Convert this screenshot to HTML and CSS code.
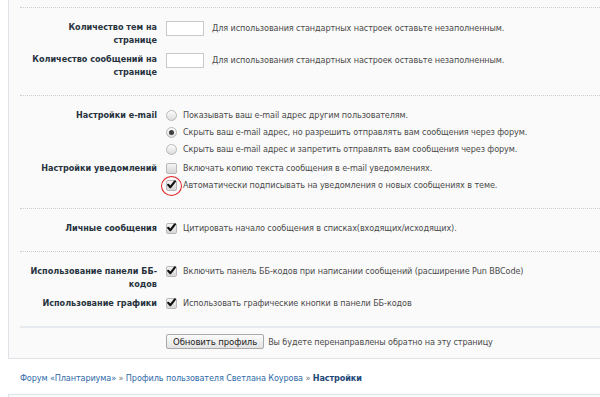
FILE: index.html
```html
<!DOCTYPE html>
<html lang="ru">
<head>
    <meta charset="UTF-8">
    <title>Настройки</title>
    <link rel="stylesheet" href="styles.css">
</head>
<body>
    <div class="panel">
        <div class="section">
            <div class="row">
                <div class="lbl">Количество тем на странице</div>
                <div class="field">
                    <span class="num"></span>
                    <span class="hint">Для использования стандартных настроек оставьте незаполненным.</span>
                </div>
            </div>
            <div class="row">
                <div class="lbl">Количество сообщений на странице</div>
                <div class="field">
                    <span class="num"></span>
                    <span class="hint">Для использования стандартных настроек оставьте незаполненным.</span>
                </div>
            </div>
        </div>

        <div class="section">
            <div class="row">
                <div class="lbl">Настройки e-mail</div>
                <div class="opts">
                    <div class="opt"><span class="radio"></span>Показывать ваш e-mail адрес другим пользователям.</div>
                    <div class="opt"><span class="radio on"></span>Скрыть ваш e-mail адрес, но разрешить отправлять вам сообщения через форум.</div>
                    <div class="opt"><span class="radio"></span>Скрыть ваш e-mail адрес и запретить отправлять вам сообщения через форум.</div>
                </div>
            </div>
            <div class="row">
                <div class="lbl">Настройки уведомлений</div>
                <div class="opts">
                    <div class="opt"><span class="check"></span>Включать копию текста сообщения в e-mail уведомлениях.</div>
                    <div class="opt"><span class="check on marked"><svg viewBox="0 0 11 11"><path d="M2.2 5.8 L4.4 8.2 L8.9 2.4" /></svg></span>Автоматически подписывать на уведомления о новых сообщениях в теме.</div>
                </div>
            </div>
        </div>

        <div class="section">
            <div class="row">
                <div class="lbl">Личные сообщения</div>
                <div class="opts">
                    <div class="opt"><span class="check on"><svg viewBox="0 0 11 11"><path d="M2.2 5.8 L4.4 8.2 L8.9 2.4" /></svg></span>Цитировать начало сообщения в списках(входящих/исходящих).</div>
                </div>
            </div>
        </div>

        <div class="section">
            <div class="row">
                <div class="lbl">Использование панели ББ-кодов</div>
                <div class="opts">
                    <div class="opt"><span class="check on"><svg viewBox="0 0 11 11"><path d="M2.2 5.8 L4.4 8.2 L8.9 2.4" /></svg></span>Включить панель ББ-кодов при написании сообщений (расширение Pun BBCode)</div>
                </div>
            </div>
            <div class="row">
                <div class="lbl">Использование графики</div>
                <div class="opts">
                    <div class="opt"><span class="check on"><svg viewBox="0 0 11 11"><path d="M2.2 5.8 L4.4 8.2 L8.9 2.4" /></svg></span>Использовать графические кнопки в панели ББ-кодов</div>
                </div>
            </div>
        </div>

        <div class="submit">
            <span class="button">Обновить профиль</span>
            <span class="note">Вы будете перенаправлены обратно на эту страницу</span>
        </div>
    </div>

    <div class="crumbs">
        <a href="#">Форум «Плантариума»</a> <span class="sep">»</span>
        <a href="#">Профиль пользователя Светлана Коурова</a> <span class="sep">»</span>
        <strong>Настройки</strong>
    </div>

    <div class="panel next"></div>
</body>
</html>
```

FILE: styles.css
```css
html, body{
    overflow: hidden;
}
body{
    margin: 0 0 0 8px;
    font-family: "DejaVu Sans Condensed", "DejaVu Sans", sans-serif;
    font-size: 9px;
    letter-spacing: -0.1px;
    color: #4a4a4a;
    background: #fff;
}
.panel{
    background: #fafafa;
    border-left: 1px solid #dfe2e7;
    border-bottom: 1px solid #dfe2e7;
    margin-right: -20px;
    padding-top: 7px;
}
.section{
    margin-left: 11px;
    border-top: 1px dotted #cfcfcf;
    padding: 13px 0 10px;
}
.row{
    display: flex;
    align-items: flex-start;
    margin-bottom: 6px;
}
.lbl{
    flex: none;
    width: 139px;
    margin-left: 7px;
    box-sizing: border-box;
    padding-right: 9px;
    text-align: right;
    font-weight: bold;
    line-height: 13px;
    letter-spacing: 0;
    color: #27323d;
}
.field{
    display: flex;
    align-items: center;
}
.num{
    width: 36px;
    height: 13px;
    background: #fff;
    border: 1px solid #c9c9c9;
    margin-right: 8px;
}
.hint{
    line-height: 13px;
}
.opts{
    display: flex;
    flex-direction: column;
    gap: 4px;
}
.opt{
    display: flex;
    align-items: center;
    height: 13px;
    line-height: 13px;
    white-space: nowrap;
}
.radio, .check{
    flex: none;
    position: relative;
    width: 9px;
    height: 9px;
    margin-right: 6px;
    border: 1px solid #b8b8b8;
    background: linear-gradient(#fdfdfd, #dcdcdc);
}
.radio{
    border-radius: 50%;
}
.radio.on::after{
    content: "";
    position: absolute;
    left: 2px;
    top: 2px;
    width: 5px;
    height: 5px;
    border-radius: 50%;
    background: #3d3d3d;
}
.check{
    border-radius: 2px;
    background: linear-gradient(#f4f4f4, #d6d6d6);
}
.check svg{
    position: absolute;
    left: -1px;
    top: -2px;
    width: 11px;
    height: 11px;
    fill: none;
    stroke: #111;
    stroke-width: 2.2;
    stroke-linecap: round;
    stroke-linejoin: round;
}
.check.marked::before{
    content: "";
    position: absolute;
    left: -6px;
    top: -5px;
    width: 19px;
    height: 18px;
    border: 1px solid #e02020;
    border-radius: 50%;
}
.submit{
    margin-left: 11px;
    border-top: 2px solid #e6e9ed;
    padding: 6px 0 9px 146px;
    display: flex;
    align-items: center;
}
.button{
    padding: 0 6px;
    border: 1px solid #a9a9a9;
    border-radius: 2px;
    background: linear-gradient(#fbfbfb, #e3e3e3);
    color: #222;
    font-size: 9.5px;
    line-height: 13px;
    margin-right: 4px;
}
.crumbs{
    padding: 13px 0 9px 12px;
    line-height: 13px;
}
.crumbs a{
    color: #2e6aa8;
    text-decoration: none;
}
.crumbs .sep{
    color: #777;
}
.crumbs strong{
    color: #1e4778;
}
.panel.next{
    border-top: 1px solid #dfe2e7;
    border-bottom: none;
    height: 40px;
    padding: 0;
}
```
